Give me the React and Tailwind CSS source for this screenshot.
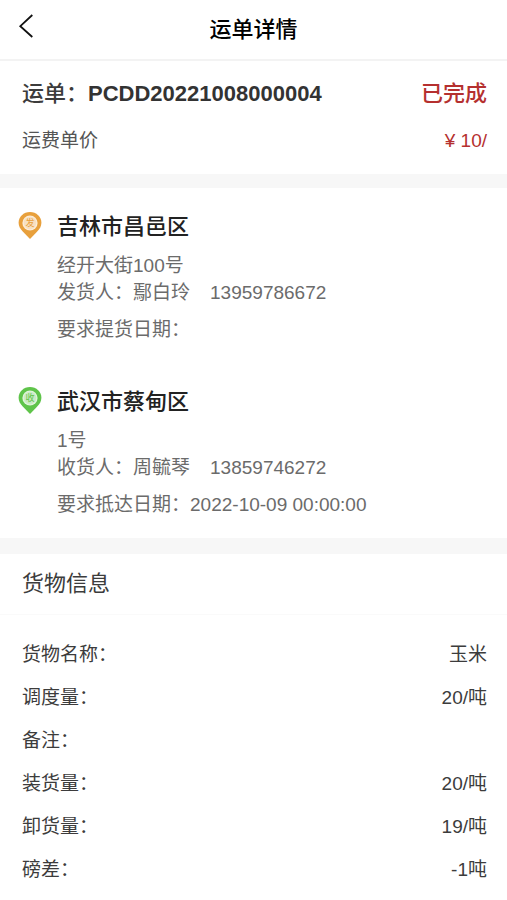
import React from 'react';

const stops = [
  {
    tag: '发',
    color: '#e8a03c',
    city: '吉林市昌邑区',
    address: '经开大街100号',
    role: '发货人',
    name: '鄢白玲',
    phone: '13959786672',
    dateLabel: '要求提货日期',
    date: '',
  },
  {
    tag: '收',
    color: '#5fc44a',
    city: '武汉市蔡甸区',
    address: '1号',
    role: '收货人',
    name: '周毓琴',
    phone: '13859746272',
    dateLabel: '要求抵达日期',
    date: '2022-10-09 00:00:00',
  },
];

const cargo = [
  { label: '货物名称', value: '玉米' },
  { label: '调度量', value: '20/吨' },
  { label: '备注', value: '' },
  { label: '装货量', value: '20/吨' },
  { label: '卸货量', value: '19/吨' },
  { label: '磅差', value: '-1吨' },
];

function Pin({ tag, color }) {
  return (
    <svg viewBox="0 0 24 28" className="w-6 h-7 shrink-0" aria-hidden="true">
      <path
        d="M12 0C5.6 0 0.6 4.8 0.6 10.8c0 3.6 1.9 6.4 4.4 9L12 27l7-7.2c2.5-2.6 4.4-5.4 4.4-9C23.4 4.8 18.4 0 12 0z"
        fill={color}
      />
      <circle cx="12" cy="11" r="7.6" fill="#fff" fillOpacity="0.8" />
      <circle cx="12" cy="11" r="6.2" fill={color} fillOpacity="0.15" />
      <text x="12" y="14.4" textAnchor="middle" fontSize="9" fill={color}>
        {tag}
      </text>
    </svg>
  );
}

function Stop({ stop }) {
  return (
    <div className="flex gap-[15px]">
      <Pin tag={stop.tag} color={stop.color} />
      <div className="flex-1 text-[19px] leading-[27px] text-[#6b6b6b]">
        <h2 className="text-[22px] leading-[30px] font-medium text-[#222]">{stop.city}</h2>
        <p className="mt-2.5">{stop.address}</p>
        <p>
          {stop.role}：{stop.name}
          <span className="ml-5">{stop.phone}</span>
        </p>
        <p className="mt-2.5">
          {stop.dateLabel}：{stop.date}
        </p>
      </div>
    </div>
  );
}

export default function App() {
  return (
    <div
      lang="zh-CN"
      className="min-h-screen bg-white font-['Liberation_Sans','Noto_Sans_CJK_SC',sans-serif] text-[#3c3c3c]"
    >
      <header className="grid grid-cols-[1fr_auto_1fr] items-center h-[61px] px-[18px] border-b-2 border-[#f3f3f3]">
        <button aria-label="返回" className="justify-self-start pb-2">
          <svg viewBox="0 0 16 24" className="w-4 h-6" fill="none" stroke="#111" strokeWidth="1.8">
            <path d="M14.3 1L2.3 12.2L14.3 23" />
          </svg>
        </button>
        <h1 className="text-[22px] leading-[30px] font-medium text-black">运单详情</h1>
      </header>

      <section className="pl-[22px] pr-5 pt-[18px] pb-5">
        <div className="flex justify-between text-[22px] leading-[30px]">
          <p className="font-medium">
            运单：<span className="font-bold text-[#333]">PCDD20221008000004</span>
          </p>
          <span className="font-medium text-[#b5302f]">已完成</span>
        </div>
        <div className="flex justify-between mt-[18px] text-[19px] leading-[27px]">
          <span className="text-[#555]">运费单价</span>
          <span className="text-[#b5302f]">¥ 10/</span>
        </div>
      </section>

      <div className="h-3.5 bg-[#f7f7f7]" />

      <section className="flex flex-col gap-11 pl-[18px] pr-5 pt-6 pb-5">
        {stops.map((stop) => (
          <Stop key={stop.tag} stop={stop} />
        ))}
      </section>

      <div className="h-4 bg-[#f7f7f7]" />

      <section>
        <h2 className="pl-[22px] pr-5 py-[15px] text-[22px] leading-[30px] border-b border-[#fafafa]">
          货物信息
        </h2>
        <dl className="pl-[22px] pr-5 pt-[18px] text-[19px] leading-[43px]">
          {cargo.map((item) => (
            <div key={item.label} className="flex justify-between">
              <dt>{item.label}：</dt>
              <dd>{item.value}</dd>
            </div>
          ))}
        </dl>
      </section>
    </div>
  );
}
